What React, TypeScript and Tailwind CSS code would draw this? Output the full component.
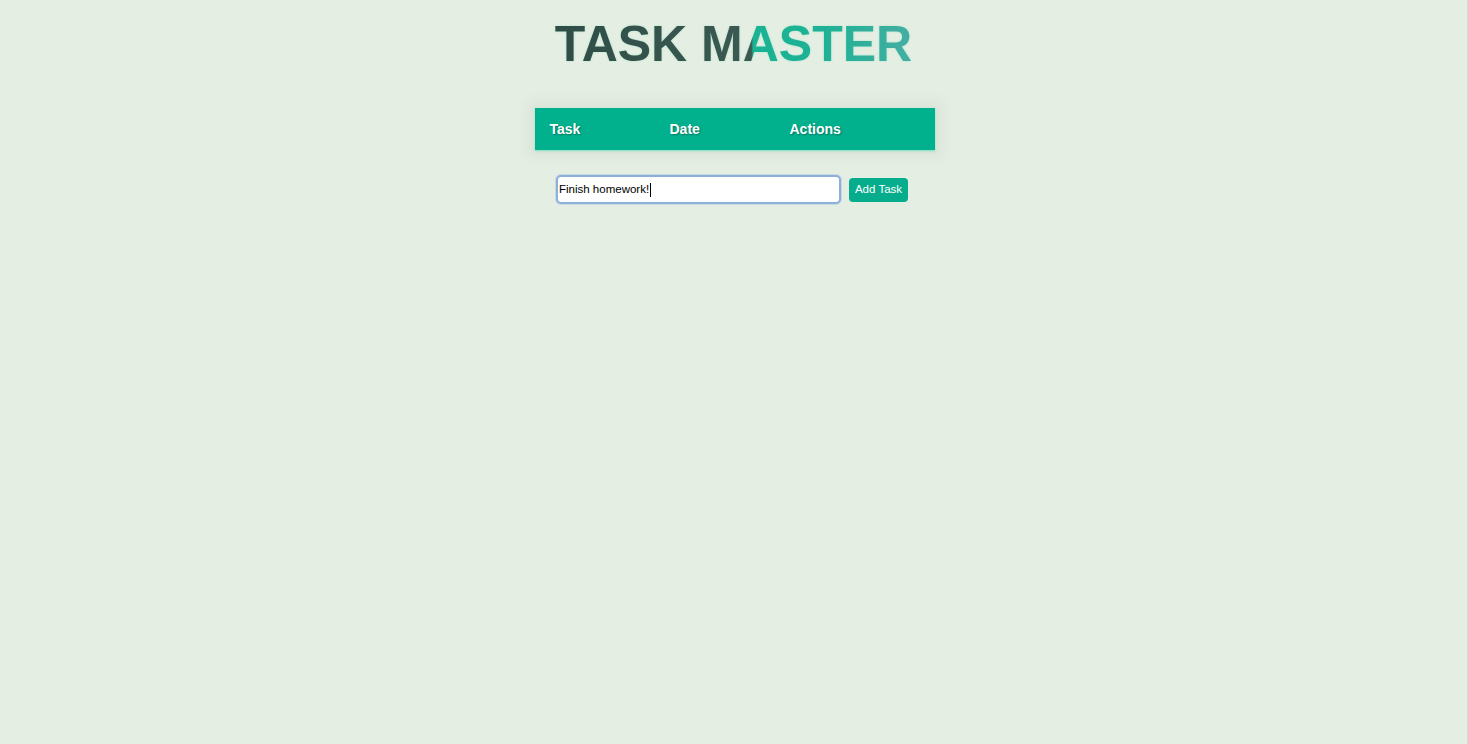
import React, { useState } from 'react';

const columns = [
  { label: 'Task', width: 'w-[120px]' },
  { label: 'Date', width: 'w-[120px]' },
  { label: 'Actions', width: 'flex-1' },
];

export default function App() {
  const [task] = useState('Finish homework!');

  return (
    <div className="min-h-screen w-full bg-[#e5eee2] border-r border-[#d4dcd2] font-['Liberation_Sans',Arial,sans-serif]">
      <div className="flex flex-col items-center pt-[19px]">
        {/* Title */}
        <h1 className="text-[50px] leading-none font-bold bg-[linear-gradient(90deg,#2f4d46_0%,#3c5a52_55%,#1ab394_55.5%,#1fb195_75%,#44aea2_100%)] bg-clip-text text-transparent [filter:drop-shadow(0_0_1px_rgba(60,220,180,0.35))]">
          TASK MASTER
        </h1>

        {/* Table header */}
        <div className="mt-[39px] ml-[2px] flex w-[400px] h-[42px] items-center bg-[#01b18e] shadow-[0_1px_2px_rgba(40,220,170,0.55),0_0_12px_8px_rgba(0,0,0,0.04)]">
          {columns.map((col) => (
            <div
              key={col.label}
              className={`${col.width} pl-[15px] text-[14px] font-bold text-white [text-shadow:1px_1px_2px_rgba(0,0,0,0.35)]`}
            >
              {col.label}
            </div>
          ))}
        </div>

        {/* New task form */}
        <div className="mt-[25px] mr-[3px] flex items-center gap-[8px]">
          <div className="w-[285px] h-[29px] rounded-[5px] border-2 border-[#8db0db] bg-white flex items-center pl-[1px] shadow-[0_0_0_1px_rgba(140,180,225,0.35)]">
            <span className="text-[11.5px] text-black">{task}</span>
            <span className="ml-[1px] w-px h-[14px] bg-black" />
          </div>
          <button className="h-[24px] w-[59px] rounded-[4px] bg-[#05ad8d] text-white text-[11.5px] leading-none">
            Add Task
          </button>
        </div>
      </div>
    </div>
  );
}
